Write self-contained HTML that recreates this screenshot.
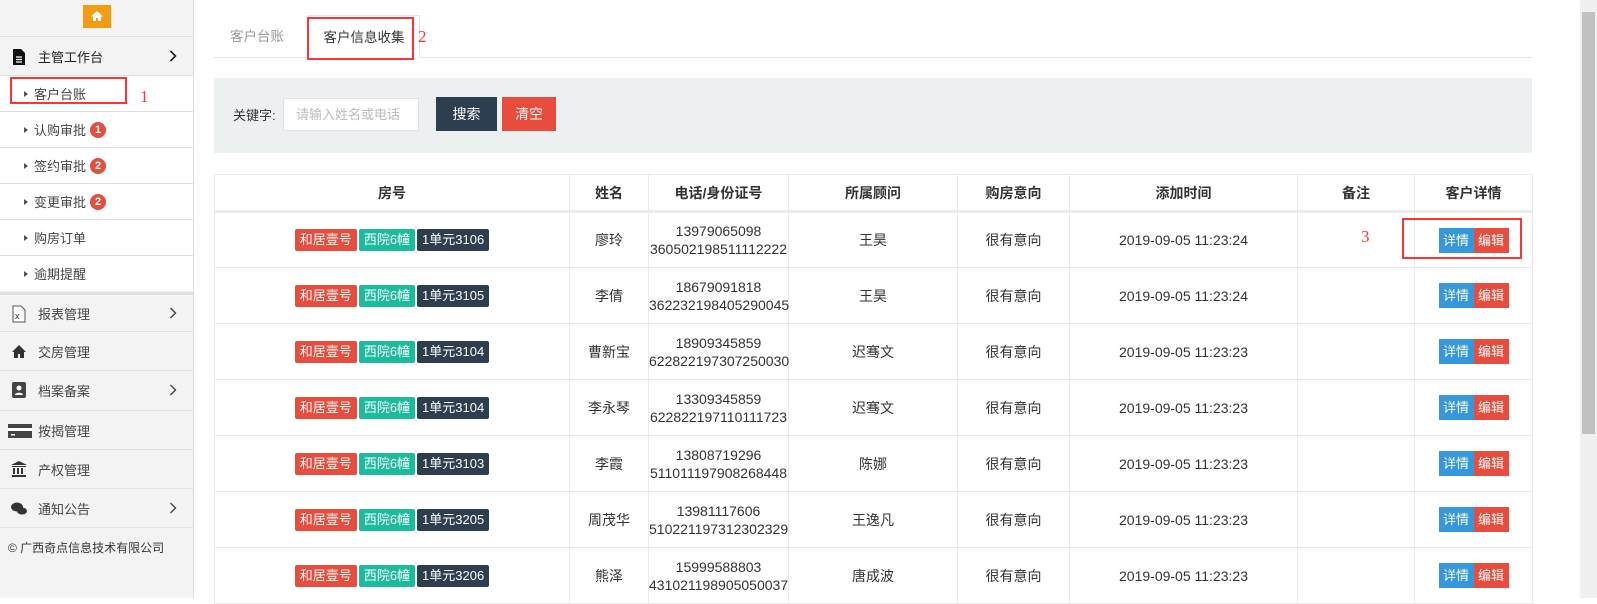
<!DOCTYPE html>
<html><head><meta charset="utf-8"><style>
*{box-sizing:border-box;margin:0;padding:0}
body{width:1597px;height:598px;overflow:hidden;font-family:"Liberation Sans","Noto Sans CJK SC",sans-serif;font-size:13px;color:#333;background:#fff;position:relative}
.sb{position:absolute;left:0;top:0;width:194px;height:598px;background:#f3f3f3;border-right:1px solid #ddd}
.home{position:absolute;left:83px;top:5px;width:28px;height:23px;background:#f39c12}
.row{position:absolute;left:0;width:193px;border-top:1px solid #e0e0e0;display:flex;align-items:center}
.sub{background:#fff;height:36px;padding-left:24px;color:#444}
.sub:before{content:"";border-left:4px solid #555;border-top:3.5px solid transparent;border-bottom:3.5px solid transparent;margin-right:6px}
.bd{display:inline-block;width:16px;height:16px;border-radius:8px;background:#e74c3c;color:#fff;font-size:11px;text-align:center;line-height:16px;margin-left:4px;font-weight:bold}
.mm{height:39px;padding-left:38px;color:#444}
.ico{position:absolute;left:10px;width:18px;height:18px;color:#444}
.arr{position:absolute;left:169px;top:50%;margin-top:-6px;width:8px;height:12px}
table{position:absolute;left:214px;top:174px;border-collapse:collapse;width:1318px;table-layout:fixed}
td,th{border:1px solid #eaeaea;text-align:center;color:#333;white-space:nowrap;overflow:visible}
th{height:37px;font-weight:bold;border-bottom:3px solid #eaeded;font-size:14px}
td{height:56px;line-height:18px;font-size:14px}
.tg{display:inline-block;color:#fff;font-size:13px;padding:0 5px;height:22px;line-height:22px;border-radius:2px;margin:0 1px;vertical-align:middle}
.b{display:inline-block;color:#fff;font-size:13px;width:35px;height:25px;line-height:25px;vertical-align:middle}
.rb{position:absolute;border:2px solid #f33}
.an{position:absolute;color:#f33;font-family:"Liberation Serif",serif;font-size:17px}
.tab{position:absolute;top:15px;height:43px;line-height:43px;font-size:13.5px}
.sp{position:absolute;left:214px;top:78px;width:1318px;height:75px;background:#ecf0f1}
</style></head><body>
<div class="sb">
<div class="home"><svg width="28" height="23" viewBox="0 0 28 23"><path d="M14 6 L8 11.5 H10 V16 H13 V13 H15 V16 H18 V11.5 H20 Z" fill="#fff"/></svg></div>
<div class="row" style="top:36px;height:39px;padding-left:38px;color:#222"><svg class="ico" style="top:11px" viewBox="0 0 18 18"><path d="M3 1h8l4 4v12H3z" fill="#111"/><path d="M6 9h6M6 11.5h6M6 14h6" stroke="#fff" stroke-width="1.3"/></svg>主管工作台<svg class="arr" viewBox="0 0 8 12"><path d="M1.5 1l5 5-5 5" fill="none" stroke="#222" stroke-width="1.6"/></svg></div>
<div class="row sub" style="top:75px">客户台账</div>
<div class="row sub" style="top:111px">认购审批<span class="bd">1</span></div>
<div class="row sub" style="top:147px">签约审批<span class="bd">2</span></div>
<div class="row sub" style="top:183px">变更审批<span class="bd">2</span></div>
<div class="row sub" style="top:219px">购房订单</div>
<div class="row sub" style="top:255px">逾期提醒</div>
<div class="row mm" style="top:292px;border-top:3px solid #e0e0e0"><svg class="ico" style="top:10px" viewBox="0 0 18 18"><path d="M3 1h8l4 4v12H3z" fill="#fff" stroke="#555"/><text x="5" y="14" font-size="9" fill="#333">x</text></svg>报表管理<svg class="arr" viewBox="0 0 8 12"><path d="M1.5 1l5 5-5 5" fill="none" stroke="#444" stroke-width="1.4"/></svg></div>
<div class="row mm" style="top:331px"><svg class="ico" style="top:10px" viewBox="0 0 18 18"><path d="M9 3L2 10h2v6h4v-4h2v4h4v-6h2z" fill="#333"/></svg>交房管理</div>
<div class="row mm" style="top:370px"><svg class="ico" style="top:10px" viewBox="0 0 18 18"><rect x="2" y="1" width="14" height="16" rx="2" fill="#444"/><circle cx="9" cy="7" r="2.5" fill="#fff"/><path d="M5 14c0-3 8-3 8 0z" fill="#fff"/></svg>档案备案<svg class="arr" viewBox="0 0 8 12"><path d="M1.5 1l5 5-5 5" fill="none" stroke="#444" stroke-width="1.4"/></svg></div>
<div class="row mm" style="top:410px"><svg class="ico" style="top:11px;left:8px;width:24px" viewBox="0 0 24 18"><rect x="0" y="2" width="24" height="14" fill="#444"/><rect x="0" y="6" width="24" height="3" fill="#fff"/><rect x="3" y="12" width="4" height="1.5" fill="#fff"/></svg>按揭管理</div>
<div class="row mm" style="top:449px"><svg class="ico" style="top:10px" viewBox="0 0 18 18"><path d="M9 1L1 5h16z M2 6h14v1H2z M3 8h2v6H3z M7 8h2v6H7z M11 8h2v6h-2z M2 15h14v2H2z" fill="#333"/></svg>产权管理</div>
<div class="row mm" style="top:488px"><svg class="ico" style="top:10px" viewBox="0 0 18 18"><ellipse cx="7" cy="8" rx="6" ry="4.5" fill="#333"/><ellipse cx="12" cy="12" rx="5" ry="3.5" fill="#333"/></svg>通知公告<svg class="arr" viewBox="0 0 8 12"><path d="M1.5 1l5 5-5 5" fill="none" stroke="#444" stroke-width="1.4"/></svg></div>
<div class="row" style="top:527px;height:40px;padding-left:8px;font-size:12px;color:#333">© 广西奇点信息技术有限公司</div>
</div>
<div style="position:absolute;left:214px;top:57px;width:1318px;border-top:1px solid #e5e5e5"></div>
<div class="tab" style="left:230px;color:#999">客户台账</div>
<div class="tab" style="left:308px;width:112px;background:#fff;border:1px solid #e5e5e5;border-bottom:none;text-align:center;color:#333">客户信息收集</div>
<div class="sp">
<span style="position:absolute;left:19px;top:27px">关键字:</span>
<div style="position:absolute;left:69px;top:20px;width:136px;height:33px;background:#fff;border:1px solid #dde4e8;color:#bbb;line-height:31px;padding-left:12px">请输入姓名或电话</div>
<div style="position:absolute;left:222px;top:19px;width:61px;height:34px;background:#2c3e50;color:#fff;text-align:center;line-height:34px;font-size:14px">搜索</div>
<div style="position:absolute;left:288px;top:19px;width:54px;height:34px;background:#e74c3c;color:#fff;text-align:center;line-height:34px;font-size:14px">清空</div>
</div>
<table>
<colgroup><col style="width:355px"><col style="width:79px"><col style="width:140px"><col style="width:169px"><col style="width:112px"><col style="width:228px"><col style="width:117px"><col style="width:118px"></colgroup>
<tr><th>房号</th><th>姓名</th><th>电话/身份证号</th><th>所属顾问</th><th>购房意向</th><th>添加时间</th><th>备注</th><th>客户详情</th></tr>
<tr><td><span class="tg" style="background:#e74c3c">和居壹号</span><span class="tg" style="background:#1abc9c">西院6幢</span><span class="tg" style="background:#2c3e50">1单元3106</span></td><td>廖玲</td><td>13979065098<br>360502198511112222</td><td>王昊</td><td>很有意向</td><td>2019-09-05 11:23:24</td><td></td><td><span class="b" style="background:#3498db">详情</span><span class="b" style="background:#e74c3c">编辑</span></td></tr>
<tr><td><span class="tg" style="background:#e74c3c">和居壹号</span><span class="tg" style="background:#1abc9c">西院6幢</span><span class="tg" style="background:#2c3e50">1单元3105</span></td><td>李倩</td><td>18679091818<br>362232198405290045</td><td>王昊</td><td>很有意向</td><td>2019-09-05 11:23:24</td><td></td><td><span class="b" style="background:#3498db">详情</span><span class="b" style="background:#e74c3c">编辑</span></td></tr>
<tr><td><span class="tg" style="background:#e74c3c">和居壹号</span><span class="tg" style="background:#1abc9c">西院6幢</span><span class="tg" style="background:#2c3e50">1单元3104</span></td><td>曹新宝</td><td>18909345859<br>622822197307250030</td><td>迟骞文</td><td>很有意向</td><td>2019-09-05 11:23:23</td><td></td><td><span class="b" style="background:#3498db">详情</span><span class="b" style="background:#e74c3c">编辑</span></td></tr>
<tr><td><span class="tg" style="background:#e74c3c">和居壹号</span><span class="tg" style="background:#1abc9c">西院6幢</span><span class="tg" style="background:#2c3e50">1单元3104</span></td><td>李永琴</td><td>13309345859<br>622822197110111723</td><td>迟骞文</td><td>很有意向</td><td>2019-09-05 11:23:23</td><td></td><td><span class="b" style="background:#3498db">详情</span><span class="b" style="background:#e74c3c">编辑</span></td></tr>
<tr><td><span class="tg" style="background:#e74c3c">和居壹号</span><span class="tg" style="background:#1abc9c">西院6幢</span><span class="tg" style="background:#2c3e50">1单元3103</span></td><td>李霞</td><td>13808719296<br>511011197908268448</td><td>陈娜</td><td>很有意向</td><td>2019-09-05 11:23:23</td><td></td><td><span class="b" style="background:#3498db">详情</span><span class="b" style="background:#e74c3c">编辑</span></td></tr>
<tr><td><span class="tg" style="background:#e74c3c">和居壹号</span><span class="tg" style="background:#1abc9c">西院6幢</span><span class="tg" style="background:#2c3e50">1单元3205</span></td><td>周茂华</td><td>13981117606<br>510221197312302329</td><td>王逸凡</td><td>很有意向</td><td>2019-09-05 11:23:23</td><td></td><td><span class="b" style="background:#3498db">详情</span><span class="b" style="background:#e74c3c">编辑</span></td></tr>
<tr><td><span class="tg" style="background:#e74c3c">和居壹号</span><span class="tg" style="background:#1abc9c">西院6幢</span><span class="tg" style="background:#2c3e50">1单元3206</span></td><td>熊泽</td><td>15999588803<br>431021198905050037</td><td>唐成波</td><td>很有意向</td><td>2019-09-05 11:23:23</td><td></td><td><span class="b" style="background:#3498db">详情</span><span class="b" style="background:#e74c3c">编辑</span></td></tr>
</table>
<div class="rb" style="left:10px;top:77px;width:117px;height:27px"></div>
<div class="rb" style="left:307px;top:17px;width:107px;height:43px"></div>
<div class="rb" style="left:1402px;top:218px;width:120px;height:41px"></div>
<div class="an" style="left:140px;top:87px">1</div>
<div class="an" style="left:418px;top:27px">2</div>
<div class="an" style="left:1361px;top:227px">3</div>
<div style="position:absolute;left:1580px;top:0;width:17px;height:598px;background:#f0f0f0"><div style="position:absolute;left:2px;top:12px;width:13px;height:422px;background:#c1c1c1"></div></div>
</body></html>
